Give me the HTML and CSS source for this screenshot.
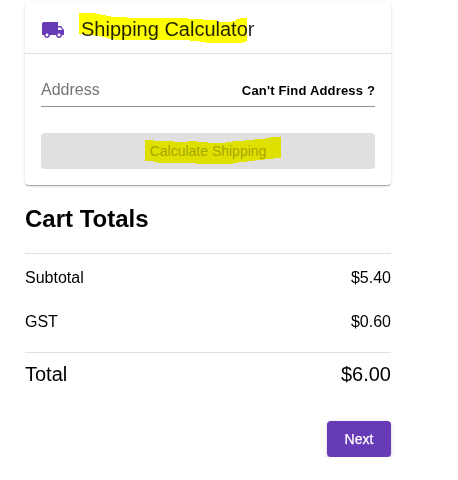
FILE: index.html
```html
<!DOCTYPE html>
<html lang="en">
<head>
<meta charset="utf-8">
<title>Shipping Calculator</title>
<link rel="stylesheet" href="styles.css">
</head>
<body>
<main class="cart">
  <section class="card">
    <header class="card-header">
      <svg class="truck" viewBox="0 0 24 24" aria-hidden="true"><path d="M20 8h-3V4H3c-1.1 0-2 .9-2 2v11h2c0 1.66 1.34 3 3 3s3-1.34 3-3h6c0 1.66 1.34 3 3 3s3-1.34 3-3h2v-5l-3-4zM6 18.500c-.83 0-1.500-.67-1.500-1.500s.67-1.500 1.500-1.500 1.500.67 1.500 1.500-.67 1.500-1.500 1.500zm13.500-9l1.960 2.500H17V9.500h2.500zm-1.500 9c-.83 0-1.500-.67-1.500-1.500s.67-1.500 1.500-1.500 1.500.67 1.500 1.500-.67 1.500-1.500 1.500z"/></svg>
      <h1 class="card-title">Shipping Calculator
        <svg class="marker marker-title" viewBox="79 13 169 31" aria-hidden="true"><path d="M79 13H96V14H101V15H106V16H111V17H127V18H188V19H203V20H217V22H231V21H236V19H240V18H247V40L246 42H243V43H206V42H199V41H190V40H118L110 39L104 37L92 35L79 34Z"/></svg>
      </h1>
    </header>
    <div class="card-body">
      <div class="field">
        <span class="field-label">Address</span>
        <button class="field-action">Can't Find Address ?</button>
      </div>
      <button class="calculate"><span class="calculate-label">Calculate Shipping</span>
        <svg class="marker marker-button" viewBox="145 137 136 28" aria-hidden="true"><path d="M145 140H154V141H174V142H188V141H197V142H208V143H226V142H233V141H245V140H254V139H265V138H270V137H281V158H274V159H265V160H255V161H247V162H238V163H233V164H196V163H158V162H153V161H145Z"/></svg>
      </button>
    </div>
  </section>
  <h2 class="totals-title">Cart Totals</h2>
  <dl class="totals">
    <div class="row"><dt>Subtotal</dt><dd>$5.40</dd></div>
    <div class="row"><dt>GST</dt><dd>$0.60</dd></div>
    <div class="row row-total"><dt>Total</dt><dd>$6.00</dd></div>
  </dl>
  <button class="next">Next</button>
</main>
</body>
</html>
```
FILE: styles.css
```css
* { box-sizing: border-box; margin: 0; }
body { background: #fff; color: #000; font-family: "Liberation Sans", Arial, sans-serif; }
button { font: inherit; border: 0; padding: 0; color: inherit; background: none; }
.cart { display: flex; flex-direction: column; width: 366px; margin: 2px 0 0 25px; }
.card { height: 183px; border-radius: 4px; box-shadow: 0 2px 1px -1px rgba(0,0,0,.2), 0 1px 1px rgba(0,0,0,.14), 0 1px 3px rgba(0,0,0,.12); }
.card-header { display: flex; align-items: center; height: 52px; padding: 2px 16px 0; gap: 16px; border-bottom: 1px solid #e0e0e0; }
.truck { width: 24px; height: 24px; margin-top: 2px; fill: #673ab7; }
.card-title { position: relative; font-size: 20px; line-height: 32px; font-weight: 400; color: rgba(0,0,0,.87); white-space: nowrap; }
.marker { position: absolute; fill: #ff0; mix-blend-mode: multiply; overflow: visible; }
.marker-title { left: -2px; top: 0; width: 169px; height: 31px; }
.card-body { padding: 20px 16px 16px; }
.field { display: flex; align-items: center; justify-content: space-between; height: 33px; border-bottom: 1px solid #949494; }
.field-label { font-size: 16px; color: #757575; }
.field-action { font-size: 13px; font-weight: 700; letter-spacing: .17px; }
.calculate { position: relative; display: block; width: 100%; height: 36px; margin-top: 26px; border-radius: 4px; background: #e0e0e0; color: #a6a6a6; font-size: 14px; }
.marker-button { left: 104px; top: 4px; width: 136px; height: 28px; }
.totals-title { margin-top: 20px; font-size: 24px; line-height: 28px; }
.totals { margin-top: 20px; border-top: 1px solid #e0e0e0; font-size: 16px; }
.row { display: flex; justify-content: space-between; align-items: center; height: 44px; padding-top: 4px; }
.row-total { height: 44px; margin-top: 10px; padding: 0; border-top: 1px solid #e0e0e0; font-size: 20px; }
.next { align-self: flex-end; width: 64px; height: 36px; margin-top: 25px; border-radius: 4px; background: #673ab7; color: #fff; font-size: 14px; -webkit-text-stroke: .25px #fff; box-shadow: 0 3px 1px -2px rgba(0,0,0,.2), 0 2px 2px rgba(0,0,0,.14), 0 1px 5px rgba(0,0,0,.12); }
```
